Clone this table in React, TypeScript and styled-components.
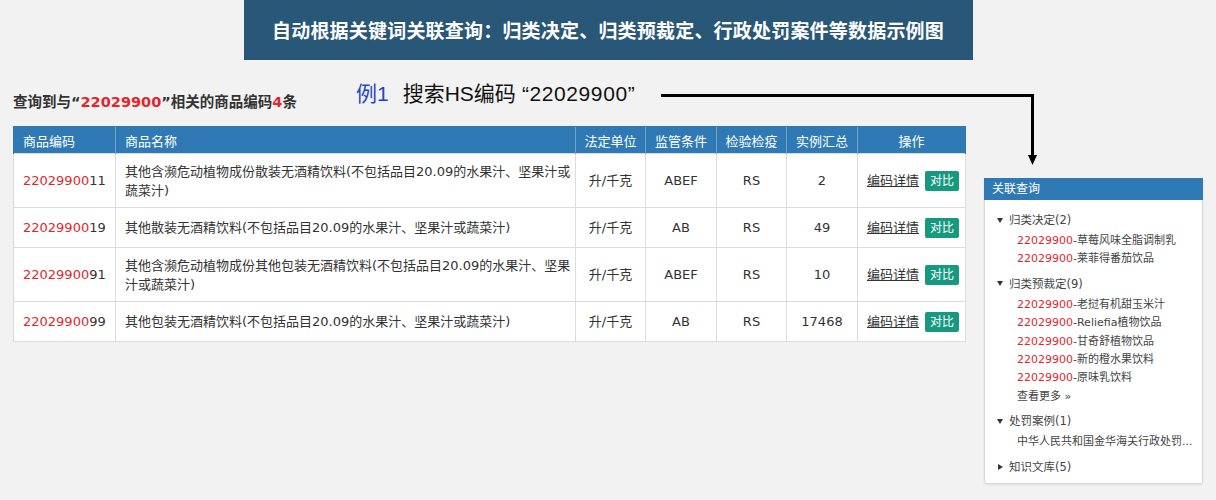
import React from "react";
import styled, { createGlobalStyle } from "styled-components";

const GlobalStyle = createGlobalStyle`
  html, body { margin: 0; padding: 0; background: #f2f2f2; }
  body { font-family: "DejaVu Sans", "Noto Sans CJK SC", sans-serif; color: #333; }
  * { box-sizing: border-box; }
`;

const CJK = `"DejaVu Sans", "Noto Sans CJK SC", sans-serif`;

const Page = styled.div`
  position: relative;
  width: 1216px;
  height: 500px;
  overflow: hidden;
  background: #f2f2f2;
`;

const Banner = styled.div`
  margin: 0 auto;
  width: 729px;
  height: 60px;
  background: #295777;
  color: #fff;
  display: flex;
  align-items: center;
  justify-content: center;
  font-family: "Noto Sans CJK SC", sans-serif;
  font-weight: 700;
  font-size: 19px;
  letter-spacing: 0.2px;
  padding-bottom: 2px;
`;

const Main = styled.div`
  display: flex;
  align-items: flex-start;
  padding: 0 13px;
`;

const Left = styled.div`
  width: 952px;
`;

const TitleRow = styled.div`
  height: 66px;
  display: flex;
  align-items: flex-start;
`;

const Title = styled.div`
  width: 343px;
  padding-top: 32px;
  font-family: ${CJK};
  font-size: 14.5px;
  font-weight: 700;
  line-height: 20px;
  color: #333;
  white-space: nowrap;
`;

const Red = styled.span<{ $bold?: boolean }>`
  color: #e3262c;
  font-weight: ${(p) => (p.$bold ? 700 : 400)};
`;

const Annotation = styled.div`
  margin-top: 21px;
  font-family: "Liberation Sans", "Noto Sans CJK SC", sans-serif;
  font-size: 21px;
  line-height: 26px;
  color: #111;
  white-space: nowrap;
`;

const ExampleLabel = styled.span`
  color: #2343c9;
  margin-right: 14px;
`;

const Quoted = styled.span`
  margin-left: 6px;
  letter-spacing: 0.6px;
`;

const Table = styled.table`
  width: 952px;
  border-collapse: collapse;
  table-layout: fixed;
  background: #fff;
  font-family: ${CJK};
  font-size: 13px;
`;

const Th = styled.th<{ $left?: boolean }>`
  height: 27px;
  padding: 0 ${(p) => (p.$left ? 9 : 2)}px;
  background: #2f7ab4;
  color: #fff;
  font-weight: 400;
  font-size: 13px;
  white-space: nowrap;
  text-align: ${(p) => (p.$left ? "left" : "center")};
  border-left: 1px solid #6fa3cc;
  border-top: 1px solid #2f7ab4;
  &:first-child { border-left: 1px solid #2f7ab4; }
  &:last-child { border-right: 1px solid #2f7ab4; }
`;

const Tr = styled.tr<{ $tall?: boolean }>`
  height: ${(p) => (p.$tall ? 54 : 40)}px;
`;

const Td = styled.td<{ $left?: boolean }>`
  border: 1px solid #dcdcdc;
  padding: 0 9px;
  color: #333;
  line-height: 19px;
  text-align: ${(p) => (p.$left ? "left" : "center")};
  white-space: nowrap;
  vertical-align: middle;
`;

const Code = styled.span`
  font-size: 13px;
`;

const DetailLink = styled.a`
  color: #333;
  text-decoration: underline;
  margin-right: 6px;
`;

const CompareBtn = styled.span`
  display: inline-block;
  background: #17997f;
  color: #fff;
  font-size: 12px;
  line-height: 20px;
  padding: 0 5px;
  border-radius: 2px;
`;

const Panel = styled.div`
  margin-left: 19px;
  margin-top: 118px;
  width: 219px;
  background: #fff;
  border: 1px solid #d8d8d8;
  border-radius: 0 0 3px 3px;
  box-shadow: 0 1px 2px rgba(0, 0, 0, 0.08);
  font-family: ${CJK};
  font-size: 11px;
`;

const PanelHeader = styled.div`
  height: 22px;
  margin: -1px -1px 0;
  background: #2f7ab4;
  color: #fff;
  font-size: 12px;
  line-height: 22px;
  padding-left: 8px;
`;

const PanelBody = styled.div`
  padding: 11px 6px 7px 12px;
`;

const Group = styled.div`
  & + & { margin-top: 6px; }
`;

const GroupTitle = styled.div`
  display: flex;
  align-items: center;
  line-height: 18px;
  font-size: 11.5px;
  color: #444;
`;

const Caret = styled.span<{ $open?: boolean }>`
  display: inline-block;
  width: 0;
  height: 0;
  margin-right: 6px;
  ${(p) =>
    p.$open
      ? `border-left: 3px solid transparent; border-right: 3px solid transparent; border-top: 5px solid #333;`
      : `border-top: 3.5px solid transparent; border-bottom: 3.5px solid transparent; border-left: 5px solid #333; margin-left: 1px;`}
`;

const Items = styled.div`
  margin-top: 3px;
  padding-left: 20px;
`;

const Item = styled.div`
  line-height: 18.4px;
  color: #444;
  white-space: nowrap;
`;

const Arrow = styled.svg`
  position: absolute;
  left: 658px;
  top: 88px;
`;

const rows = [
  { tail: "11", name: ["其他含濒危动植物成份散装无酒精饮料(不包括品目20.09的水果汁、坚果汁或", "蔬菜汁)"], unit: "升/千克", cond: "ABEF", insp: "RS", count: "2" },
  { tail: "19", name: ["其他散装无酒精饮料(不包括品目20.09的水果汁、坚果汁或蔬菜汁)"], unit: "升/千克", cond: "AB", insp: "RS", count: "49" },
  { tail: "91", name: ["其他含濒危动植物成份其他包装无酒精饮料(不包括品目20.09的水果汁、坚果", "汁或蔬菜汁)"], unit: "升/千克", cond: "ABEF", insp: "RS", count: "10" },
  { tail: "99", name: ["其他包装无酒精饮料(不包括品目20.09的水果汁、坚果汁或蔬菜汁)"], unit: "升/千克", cond: "AB", insp: "RS", count: "17468" },
];

const groups = [
  { title: "归类决定(2)", open: true, items: [["22029900", "-草莓风味全脂调制乳"], ["22029900", "-莱菲得番茄饮品"]] },
  {
    title: "归类预裁定(9)",
    open: true,
    items: [
      ["22029900", "-老挝有机甜玉米汁"],
      ["22029900", "-Reliefia植物饮品"],
      ["22029900", "-甘奇舒植物饮品"],
      ["22029900", "-新的橙水果饮料"],
      ["22029900", "-原味乳饮料"],
      ["", "查看更多 »"],
    ],
  },
  { title: "处罚案例(1)", open: true, items: [["", "中华人民共和国金华海关行政处罚..."]] },
  { title: "知识文库(5)", open: false, items: [] as string[][] },
];

export default function App() {
  return (
    <Page>
      <GlobalStyle />
      <Banner>自动根据关键词关联查询：归类决定、归类预裁定、行政处罚案件等数据示例图</Banner>
      <Main>
        <Left>
          <TitleRow>
            <Title>
              查询到与“<Red $bold>22029900</Red>”相关的商品编码<Red $bold>4</Red>条
            </Title>
            <Annotation>
              <ExampleLabel>例1</ExampleLabel>搜索HS编码<Quoted>“22029900”</Quoted>
            </Annotation>
          </TitleRow>
          <Table>
            <colgroup>
              <col style={{ width: 102 }} />
              <col style={{ width: 460 }} />
              <col style={{ width: 70 }} />
              <col style={{ width: 71 }} />
              <col style={{ width: 70 }} />
              <col style={{ width: 71 }} />
              <col style={{ width: 108 }} />
            </colgroup>
            <thead>
              <tr>
                <Th $left>商品编码</Th>
                <Th $left>商品名称</Th>
                <Th>法定单位</Th>
                <Th>监管条件</Th>
                <Th>检验检疫</Th>
                <Th>实例汇总</Th>
                <Th>操作</Th>
              </tr>
            </thead>
            <tbody>
              {rows.map((r) => (
                <Tr key={r.tail} $tall={r.name.length > 1}>
                  <Td $left>
                    <Code>
                      <Red>22029900</Red>
                      {r.tail}
                    </Code>
                  </Td>
                  <Td $left>
                    {r.name.map((l, i) => (
                      <React.Fragment key={i}>
                        {i > 0 && <br />}
                        {l}
                      </React.Fragment>
                    ))}
                  </Td>
                  <Td>{r.unit}</Td>
                  <Td>{r.cond}</Td>
                  <Td>{r.insp}</Td>
                  <Td>{r.count}</Td>
                  <Td>
                    <DetailLink>编码详情</DetailLink>
                    <CompareBtn>对比</CompareBtn>
                  </Td>
                </Tr>
              ))}
            </tbody>
          </Table>
        </Left>
        <Panel>
          <PanelHeader>关联查询</PanelHeader>
          <PanelBody>
            {groups.map((g) => (
              <Group key={g.title}>
                <GroupTitle>
                  <Caret $open={g.open} />
                  {g.title}
                </GroupTitle>
                {g.items.length > 0 && (
                  <Items>
                    {g.items.map(([code, text], i) => (
                      <Item key={i}>
                        {code && <Red>{code}</Red>}
                        {text}
                      </Item>
                    ))}
                  </Items>
                )}
              </Group>
            ))}
          </PanelBody>
        </Panel>
      </Main>
      <Arrow width="384" height="80" viewBox="0 0 384 80">
        <path d="M3 7.5 H374.5 V68" stroke="#000" strokeWidth="3" fill="none" />
        <path d="M370 67 L379 67 L374.5 77 Z" fill="#000" />
      </Arrow>
    </Page>
  );
}
